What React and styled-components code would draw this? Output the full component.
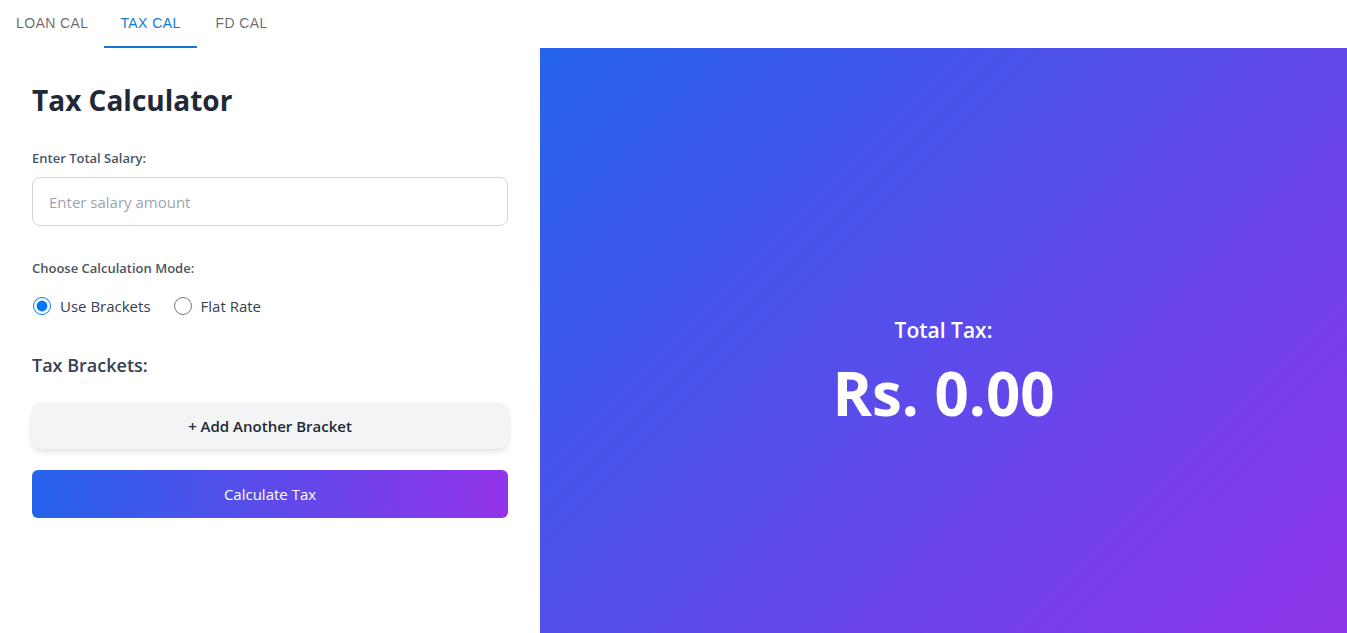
import React, { useState } from "react";
import styled, { createGlobalStyle } from "styled-components";

const GlobalStyle = createGlobalStyle`
  * { box-sizing: border-box; }
  body {
    margin: 0;
    font-family: "Open Sans", "Noto Sans", sans-serif;
    background: #fff;
    overflow: hidden;
  }
`;

const tabs = ["LOAN CAL", "TAX CAL", "FD CAL"];

function App() {
  const [activeTab, setActiveTab] = useState("TAX CAL");
  const [mode, setMode] = useState("brackets");
  const [salary, setSalary] = useState("");

  return (
    <>
      <GlobalStyle />
      <TabBar>
        {tabs.map((t) => (
          <Tab key={t} $active={activeTab === t} onClick={() => setActiveTab(t)}>
            {t}
          </Tab>
        ))}
      </TabBar>
      <Layout>
        <FormPanel>
          <Title>Tax Calculator</Title>
          <Label>Enter Total Salary:</Label>
          <Input
            placeholder="Enter salary amount"
            value={salary}
            onChange={(e) => setSalary(e.target.value)}
          />
          <Label $top={32}>Choose Calculation Mode:</Label>
          <RadioRow>
            <RadioOption>
              <Radio
                type="radio"
                name="mode"
                checked={mode === "brackets"}
                onChange={() => setMode("brackets")}
              />
              Use Brackets
            </RadioOption>
            <RadioOption>
              <Radio
                type="radio"
                name="mode"
                checked={mode === "flat"}
                onChange={() => setMode("flat")}
              />
              Flat Rate
            </RadioOption>
          </RadioRow>
          <SubTitle>Tax Brackets:</SubTitle>
          <AddButton>+ Add Another Bracket</AddButton>
          <CalcButton>Calculate Tax</CalcButton>
        </FormPanel>
        <ResultPanel>
          <ResultLabel>Total Tax:</ResultLabel>
          <ResultValue>Rs. 0.00</ResultValue>
        </ResultPanel>
      </Layout>
    </>
  );
}

const TabBar = styled.div`
  display: flex;
  height: 48px;
`;

const Tab = styled.button`
  min-width: 90px;
  padding: 12px 16px;
  border: none;
  background: none;
  font-family: "Liberation Sans", Arial, sans-serif;
  font-size: 14px;
  letter-spacing: 0.4px;
  color: ${(p) => (p.$active ? "#1976d2" : "rgba(0, 0, 0, 0.6)")};
  border-bottom: 2px solid ${(p) => (p.$active ? "#1976d2" : "transparent")};
  cursor: pointer;
`;

const Layout = styled.div`
  display: grid;
  grid-template-columns: 540px 1fr;
`;

const FormPanel = styled.div`
  padding: 32px 32px;
  display: flex;
  flex-direction: column;
`;

const Title = styled.h1`
  margin: 0 0 28px;
  font-size: 28px;
  font-weight: 700;
  color: #1f2937;
  line-height: 40px;
`;

const Label = styled.label`
  margin-top: ${(p) => p.$top || 0}px;
  font-size: 13px;
  font-weight: 600;
  color: #4b5563;
  line-height: 20px;
  margin-bottom: 9px;
`;

const Input = styled.input`
  height: 49px;
  width: 476px;
  border: 1px solid #d1d5db;
  border-radius: 8px;
  padding: 0 16px;
  font-family: inherit;
  font-size: 15px;
  color: #374151;
  outline: none;
  &::placeholder {
    color: #9ca3af;
  }
`;

const RadioRow = styled.div`
  display: flex;
  gap: 22px;
  margin-top: 8px;
`;

const RadioOption = styled.label`
  display: flex;
  align-items: center;
  gap: 9px;
  font-size: 15px;
  color: #374151;
  line-height: 22px;
`;

const Radio = styled.input`
  width: 18px;
  height: 18px;
  margin: 0 0 0 1px;
  accent-color: #0075ff;
`;

const SubTitle = styled.h3`
  margin: 35px 0 0;
  font-size: 18px;
  font-weight: 600;
  color: #374151;
  line-height: 26px;
`;

const AddButton = styled.button`
  margin-top: 25px;
  height: 46px;
  width: 476px;
  border: none;
  border-radius: 10px;
  background: #f3f4f6;
  box-shadow: 0 3px 6px rgba(0, 0, 0, 0.12);
  font-family: inherit;
  font-size: 15px;
  font-weight: 600;
  color: #1f2937;
  cursor: pointer;
`;

const CalcButton = styled.button`
  margin-top: 21px;
  height: 48px;
  width: 476px;
  border: none;
  border-radius: 6px;
  background: linear-gradient(to right, #2563eb, #9333ea);
  font-family: inherit;
  font-size: 15px;
  color: #fff;
  cursor: pointer;
`;

const ResultPanel = styled.div`
  height: 585px;
  background: linear-gradient(135deg, #2563eb, #9333ea);
  background-size: 100% 633px;
  display: flex;
  flex-direction: column;
  align-items: center;
  justify-content: center;
  color: #fff;
  padding-top: 63px;
`;

const ResultLabel = styled.div`
  font-size: 21px;
  font-weight: 600;
  line-height: 28px;
`;

const ResultValue = styled.div`
  margin-top: 13px;
  font-size: 60px;
  font-weight: 700;
  line-height: 72px;
`;

export default App;
